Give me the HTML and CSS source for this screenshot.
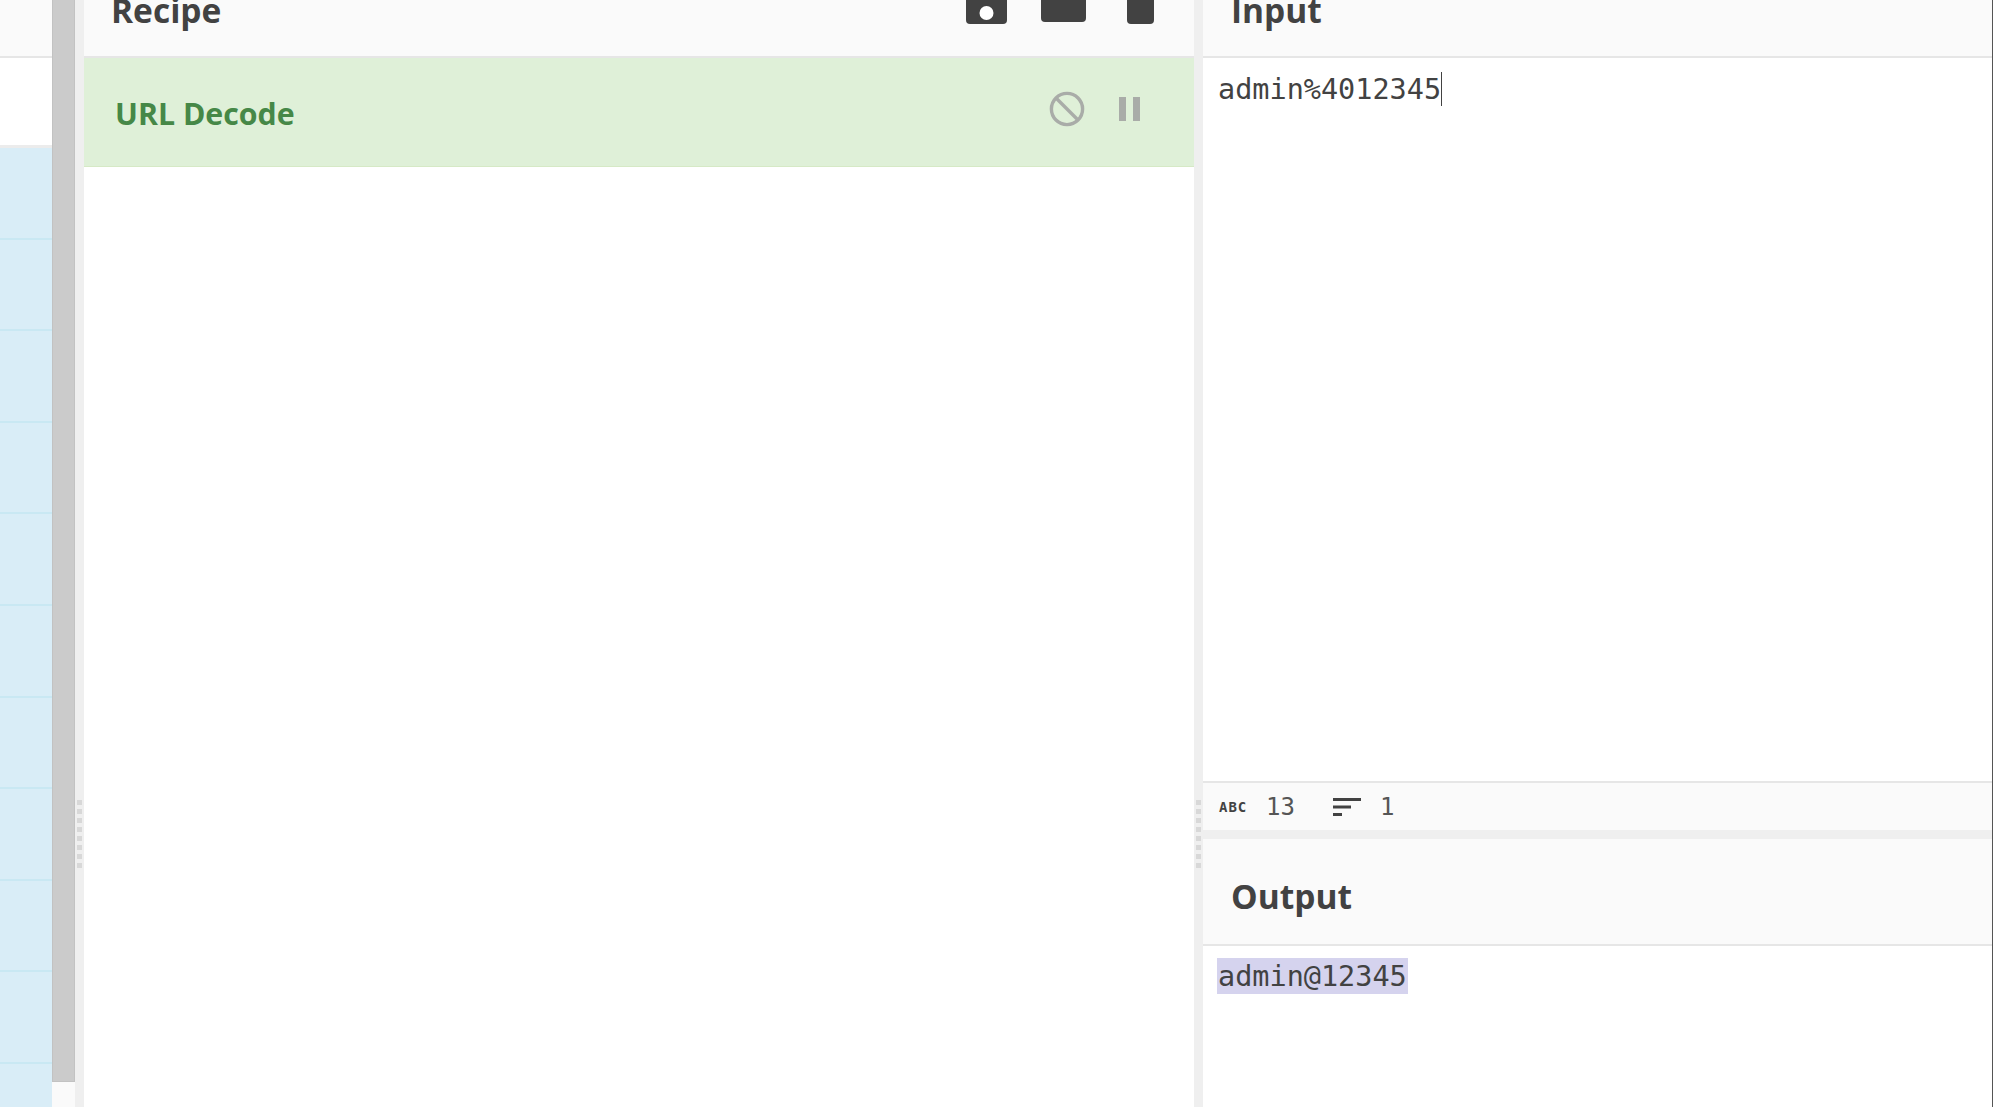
FILE: index.html
```html
<!DOCTYPE html>
<html>
<head>
  <title>CyberChef</title>
  <link rel="stylesheet" href="styles.css">
</head>
<body>
  <div class="app">
    <div class="ops-pane">
      <div class="ops-list">
        <div class="pane-header"></div>
        <div class="ops-search"></div>
        <div class="ops-item"></div>
        <div class="ops-item"></div>
        <div class="ops-item"></div>
        <div class="ops-item"></div>
        <div class="ops-item"></div>
        <div class="ops-item"></div>
        <div class="ops-item"></div>
        <div class="ops-item"></div>
        <div class="ops-item"></div>
        <div class="ops-item"></div>
        <div class="ops-item"></div>
      </div>
      <div class="scroll-track"><div class="scroll-thumb"></div></div>
    </div>

    <div class="gutter"><div class="gutter-dots"></div></div>

    <div class="recipe-pane">
      <div class="pane-header">
        <span class="pane-title">Recipe</span>
        <div class="recipe-tools">
          <!-- save -->
          <svg class="tool-save" width="41" height="24" viewBox="0 0 41 24">
            <path d="M0 0h41v20a4 4 0 0 1-4 4H4a4 4 0 0 1-4-4z" fill="#424242"/>
            <circle cx="20.5" cy="13" r="7" fill="#fff"/>
          </svg>
          <!-- folder -->
          <svg class="tool-folder" width="45" height="22" viewBox="0 0 45 22">
            <path d="M0 0h45v18a4 4 0 0 1-4 4H4a4 4 0 0 1-4-4z" fill="#424242"/>
          </svg>
          <!-- delete -->
          <svg class="tool-delete" width="27" height="24" viewBox="0 0 27 24">
            <path d="M0 0h27v20a4 4 0 0 1-4 4H4a4 4 0 0 1-4-4z" fill="#424242"/>
          </svg>
        </div>
      </div>
      <div class="op-row">
        <span class="op-name">URL Decode</span>
        <div class="op-controls">
          <svg class="op-disable" width="36" height="36" viewBox="0 0 36 36" fill="none" stroke="#a9aca8" stroke-width="3.4">
            <circle cx="18" cy="18" r="15.6"/>
            <path d="M7 7l22 22"/>
          </svg>
          <div class="op-pause"><span></span><span></span></div>
        </div>
      </div>
    </div>

    <div class="gutter"><div class="gutter-dots"></div></div>

    <div class="io-pane">
      <div class="pane-header"><span class="pane-title">Input</span></div>
      <div class="input-body"><span class="code">admin%4012345</span><span class="caret"></span></div>
      <div class="status-bar">
        <span class="abc-icon">ABC</span>
        <span class="status-num status-len">13</span>
        <svg class="lines-icon" width="28" height="18" viewBox="0 0 28 18" fill="#424242">
          <rect x="0" y="0" width="28" height="3"/>
          <rect x="0" y="7.5" width="18" height="3"/>
          <rect x="0" y="15" width="9" height="3"/>
        </svg>
        <span class="status-num">1</span>
      </div>
      <div class="io-divider"></div>
      <div class="output-header"><span class="pane-title">Output</span></div>
      <div class="output-body"><span class="code selected">admin@12345</span></div>
    </div>
  </div>
</body>
</html>
```

FILE: styles.css
```css
html, body {
  margin: 0;
  height: 100%;
  overflow: hidden;
  background: #fff;
}

body {
  font-family: "Open Sans", "Noto Sans", sans-serif;
  color: #424242;
}

.app {
  display: flex;
  height: 1107px;
  border-right: 1px solid #555;
  box-sizing: border-box;
}

/* Panes */
.ops-pane {
  flex: 0 0 75px;
  display: flex;
  overflow: hidden;
}

.recipe-pane {
  flex: 0 0 1110px;
  overflow: hidden;
}

.io-pane {
  flex: 1;
  min-width: 0;
  display: flex;
  flex-direction: column;
  overflow: hidden;
}

.pane-header {
  height: 58px;
  box-sizing: border-box;
  background: #fafafa;
  border-bottom: 2px solid #e6e6e6;
  display: flex;
  align-items: flex-end;
  justify-content: space-between;
  overflow: hidden;
}

.pane-title {
  font-size: 33.5px;
  font-weight: 700;
  line-height: 40px;
}

.recipe-pane .pane-title {
  margin: 0 0 26px 27px;
}

.io-pane .pane-title {
  margin: 0 0 26px 28px;
}

/* Operations list */
.ops-list {
  flex: 0 0 52px;
}

.ops-search {
  height: 90px;
  box-sizing: border-box;
  border-bottom: 3px solid #ececec;
}

.ops-item {
  height: 91.6px;
  box-sizing: border-box;
  background: #d9edf7;
  border-bottom: 2px solid #c9e8f3;
}

.scroll-track {
  flex: 0 0 23px;
  background: #fafafa;
}

.scroll-thumb {
  height: 1082px;
  box-sizing: border-box;
  background: #cbcbcb;
  border-left: 1px solid #c2c2c2;
  border-right: 1px solid #c2c2c2;
  border-bottom: 1px solid #c2c2c2;
}

/* Gutters */
.gutter {
  flex: 0 0 9px;
  background: #efefef;
  position: relative;
}

.gutter-dots {
  position: absolute;
  left: 2px;
  top: 800px;
  width: 5px;
  height: 72px;
  background: repeating-linear-gradient(#d8d8d8 0 5px, transparent 5px 9px);
}

/* Recipe */
.recipe-tools {
  display: flex;
  align-items: flex-start;
  height: 100%;
  margin-right: 40px;
}

.recipe-tools svg {
  display: block;
}

.tool-save {
  margin-right: 34px;
}

.tool-folder {
  margin-right: 41px;
}

.op-row {
  height: 109px;
  box-sizing: border-box;
  background: #dff0d8;
  border-bottom: 1px solid #d6e9c6;
  padding-left: 31px;
  display: flex;
  align-items: center;
  justify-content: space-between;
}

.op-name {
  font-size: 30.3px;
  font-weight: 700;
  color: #468847;
  position: relative;
  top: 1px;
}

.op-controls {
  display: flex;
  align-items: center;
  margin-right: 54px;
  gap: 34px;
  position: relative;
  top: -3px;
}

.op-disable {
  display: block;
}

.op-pause {
  display: flex;
  gap: 7px;
}

.op-pause span {
  width: 7px;
  height: 24px;
  background: #a9aca8;
}

/* Input and output */
.code {
  font-family: "DejaVu Sans Mono", "Liberation Mono", monospace;
  font-size: 28.5px;
  line-height: 36px;
  color: #424242;
}

.input-body {
  height: 723px;
  box-sizing: border-box;
  padding: 14px 0 0 15px;
  display: flex;
  align-items: flex-start;
}

.caret {
  width: 1px;
  height: 34px;
  background: #424242;
}

.status-bar {
  height: 49px;
  box-sizing: border-box;
  background: #fafafa;
  border-top: 2px solid #e6e6e6;
  display: flex;
  align-items: center;
  padding-left: 16px;
}

.abc-icon {
  font-family: "DejaVu Sans Mono", monospace;
  font-size: 14px;
  font-weight: 700;
  letter-spacing: 1px;
  width: 47px;
}

.status-num {
  font-family: "DejaVu Sans Mono", monospace;
  font-size: 24px;
  color: #555;
}

.status-len {
  width: 67px;
}

.lines-icon {
  margin-right: 19px;
}

.io-divider {
  height: 9px;
  background: #efefef;
}

.output-header {
  height: 107px;
  box-sizing: border-box;
  background: #fafafa;
  border-bottom: 2px solid #e6e6e6;
  display: flex;
  align-items: center;
  padding-top: 9px;
}

.io-pane .output-header .pane-title {
  margin: 0 0 0 28px;
}

.output-body {
  padding: 12px 0 0 14px;
}

.selected {
  background: #d5d3ee;
  padding: 2px 1px 0;
  line-height: 34px;
  display: inline-block;
}
```
